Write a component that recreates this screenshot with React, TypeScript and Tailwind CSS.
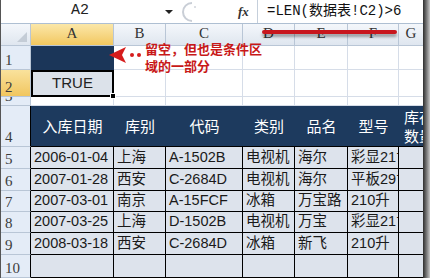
import React from 'react';

const rowNum = 'font-["Liberation_Serif",serif] text-[15px] text-[#3c3c3c] leading-none';
const cellText = 'font-["Liberation_Sans","Noto_Sans_CJK_SC",sans-serif] text-[14.5px] text-[#1a1a1a] whitespace-nowrap overflow-hidden';

const rows = [
  ['2006-01-04', '上海', 'A-1502B', '电视机', '海尔', '彩显21寸'],
  ['2007-01-28', '西安', 'C-2684D', '电视机', '海尔', '平板29寸'],
  ['2007-03-01', '南京', 'A-15FCF', '冰箱', '万宝路', '210升'],
  ['2007-03-25', '上海', 'D-1502B', '电视机', '万宝', '彩显21寸'],
  ['2008-03-18', '西安', 'C-2684D', '冰箱', '新飞', '210升'],
  ['', '', '', '', '', ''],
];

const heads = ['入库日期', '库别', '代码', '类别', '品名', '型号'];

// 行号单元格
const RowHead = ({ n, selected, dark }: { n: string; selected?: boolean; dark?: boolean }) => (
  <div
    className={`flex items-end pl-[4px] pb-[1px] overflow-hidden border-b border-r ${
      dark ? 'border-r-black border-b-[#b9c6d6]' : 'border-[#b9c6d6]'
    } ${selected ? 'bg-gradient-to-b from-[#f9e29c] to-[#f1c65e]' : 'bg-[#e4ecf7]'}`}
  >
    <span className={rowNum}>{n}</span>
  </div>
);

const Grid = () => <div className="border-r border-b border-[#d6dde8] bg-white" />;

export default function App() {
  return (
    <div className="w-[430px] h-[278px] relative overflow-hidden bg-[#8d8d8d] flex">
      <div className="w-[423px] h-full flex flex-col bg-white border-l border-[#555]">
        {/* 编辑栏 */}
        <div className="h-[24px] flex items-center border-b border-[#aebfd2] bg-white shrink-0">
          <div className="w-[158px] text-center font-['Liberation_Mono',monospace] text-[15px] text-[#222]">A2</div>
          <svg width="10" height="6" viewBox="0 0 10 6" className="ml-[5px]">
            <path d="M1 1 L9 1 L5 5 Z" fill="#222" />
          </svg>
          <svg width="22" height="22" viewBox="0 0 22 22" className="ml-[6px]">
            <path d="M12 2 A9 9 0 0 0 12 20" fill="none" stroke="#c9ced6" strokeWidth="2" />
            <path d="M14 6 L16 6" stroke="#b8bec8" strokeWidth="1" />
          </svg>
          <div className="ml-[36px] w-[19px] font-['Liberation_Serif',serif] italic text-[13px] font-bold text-[#333]">fx</div>
          <div className="h-full w-px bg-[#c5cfdb]" />
          <div className="pl-[9px] font-['Liberation_Mono','Noto_Sans_CJK_SC',monospace] text-[14px] text-[#111] whitespace-nowrap">
            =LEN(数据表!C2)&gt;6
          </div>
        </div>

        {/* 工作表 */}
        <div className="flex-1 grid grid-cols-[30px_83px_52px_77px_52px_53px_51px_25px] grid-rows-[22px_24px_27px_9px_41px_22px_22px_21px_21px_22px_23px]">
          {/* 列标 */}
          <div className="bg-gradient-to-b from-[#f4f7fb] to-[#dfe6ef] border-r border-b border-[#b9c6d6] relative">
            <svg width="10" height="10" viewBox="0 0 10 10" className="absolute right-[3px] bottom-[3px]">
              <path d="M10 0 L10 10 L0 10 Z" fill="#c4ccd6" />
            </svg>
          </div>
          {['A', 'B', 'C', 'D', 'E', 'F', 'G'].map((c) => (
            <div
              key={c}
              className={`flex items-end justify-center pb-[1px] border-r border-b border-[#b9c6d6] font-['Liberation_Serif',serif] text-[15px] text-[#333] ${
                c === 'A' ? 'bg-gradient-to-b from-[#fbe7a8] to-[#f2c85e]' : 'bg-gradient-to-b from-[#f4f7fb] to-[#dfe6ef]'
              }`}
            >
              {c}
            </div>
          ))}

          {/* 第1行 */}
          <RowHead n="1" />
          <div className="bg-[#1b3659] border-r border-b border-[#1b3659]" />
          {[0, 1, 2, 3, 4, 5].map((i) => <Grid key={'r1' + i} />)}

          {/* 第2行 */}
          <RowHead n="2" selected />
          <div className="relative bg-[#dce2ea] border-2 border-black flex items-center justify-center font-['Liberation_Sans',sans-serif] text-[15px] text-[#222]">
            TRUE
            <div className="absolute -right-[4px] -bottom-[4px] w-[6px] h-[6px] bg-black border border-white" />
          </div>
          {[0, 1, 2, 3, 4, 5].map((i) => <Grid key={'r2' + i} />)}

          {/* 第3行 */}
          <RowHead n="3" />
          {[0, 1, 2, 3, 4, 5, 6].map((i) => <Grid key={'r3' + i} />)}

          {/* 第4行 表头 */}
          <RowHead n="4" dark />
          {heads.map((h) => (
            <div
              key={h}
              className="bg-[#1d3a5e] border-b border-black flex items-center justify-center font-['Noto_Sans_CJK_SC',sans-serif] text-[15px] text-white whitespace-nowrap"
            >
              {h}
            </div>
          ))}
          <div className="bg-[#1d3a5e] border-b border-black overflow-hidden flex flex-col justify-center pl-[5px] font-['Noto_Sans_CJK_SC',sans-serif] text-[15px] leading-[19px] text-white whitespace-nowrap">
            <span>库存</span>
            <span>数量</span>
          </div>

          {/* 数据行 */}
          {rows.map((r, ri) => (
            <React.Fragment key={ri}>
              <RowHead n={String(ri + 5)} dark />
              {r.map((v, ci) => (
                <div
                  key={ci}
                  className={`bg-[#dde3ec] border-r border-b border-black flex items-center pl-[3px] ${cellText}`}
                >
                  {v}
                </div>
              ))}
              <div className="bg-[#dde3ec] border-b border-black" />
            </React.Fragment>
          ))}
        </div>
      </div>

      {/* 右侧阴影 */}
      <div className="w-[7px] h-full bg-gradient-to-r from-[#2e2e2e] to-[#c9c9c9]" />

      {/* 红色下划线标注 */}
      <div className="absolute left-[262px] top-[30px] w-[135px] h-[4px] rounded-full bg-[#c8161d] shadow-[0_3px_3px_rgba(0,0,0,0.35)]" />

      {/* 红色箭头与说明 */}
      <svg width="36" height="20" viewBox="0 0 36 20" className="absolute left-[108px] top-[45px]">
        <path d="M1 10 L18 2 L14 10 L18 18 Z" fill="#d61c1c" />
        <circle cx="24" cy="10" r="2" fill="#d61c1c" />
        <circle cx="31" cy="10" r="2" fill="#d61c1c" />
      </svg>
      <div className="absolute left-[145px] top-[40px] font-['Noto_Sans_CJK_SC',sans-serif] font-bold text-[13px] leading-[17px] text-[#c81818] whitespace-nowrap">
        <div>留空，但也是条件区</div>
        <div>域的一部分</div>
      </div>
    </div>
  );
}
